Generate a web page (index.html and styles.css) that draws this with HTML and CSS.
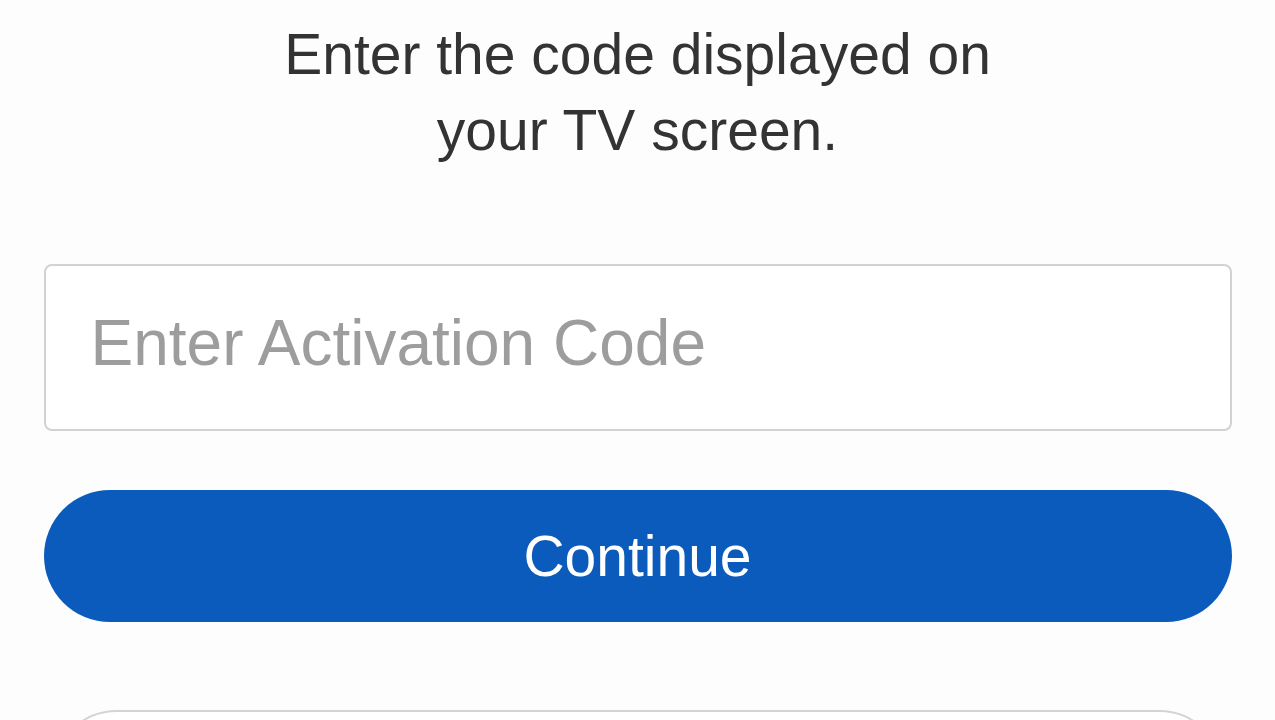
FILE: index.html
```html
<!DOCTYPE html>
<html lang="en">

<head>
  <meta charset="UTF-8">
  <meta name="viewport" content="width=device-width, initial-scale=1.0">
  <title>Activate your TV</title>
  <link rel="stylesheet" href="styles.css">
</head>

<body>
  <div class="container">
    <h1 class="title">Enter the code displayed on<br>your TV screen.</h1>

    <input type="text" class="code-input" id="codigo" placeholder="Enter Activation Code">

    <button class="btn-continue">Continue</button>

    <div class="btn-outline"></div>
  </div>
</body>

</html>
```

FILE: styles.css
```css
html,
body {
  overflow: hidden;
}

body {
  font-family: "Liberation Sans", Arial, sans-serif;
  background-color: #fdfdfd;
  margin: 0;
  padding: 0;
}

.container {
  width: 1188px;
  margin: 0 auto;
  display: flex;
  flex-direction: column;
}

.title {
  margin: 0;
  padding-top: 16px;
  font-size: 57px;
  font-weight: normal;
  line-height: 76px;
  text-align: center;
  color: #333;
}

.code-input {
  box-sizing: border-box;
  width: 100%;
  height: 167px;
  margin-top: 96px;
  padding: 0 45px 9px;
  border: 2px solid #d2d2d2;
  border-radius: 8px;
  background-color: #fff;
  font-family: inherit;
  font-size: 64px;
  color: #333;
}

.code-input::placeholder {
  color: #9d9d9d;
}

.btn-continue {
  width: 100%;
  height: 132px;
  margin-top: 59px;
  border: none;
  border-radius: 66px;
  background-color: #0a5bbb;
  color: white;
  font-family: inherit;
  font-size: 57px;
  cursor: pointer;
}

.btn-outline {
  box-sizing: border-box;
  height: 130px;
  margin: 88px 8px 0;
  border: 2px solid #d4d4d4;
  border-radius: 66px;
  background-color: #fff;
}
```
